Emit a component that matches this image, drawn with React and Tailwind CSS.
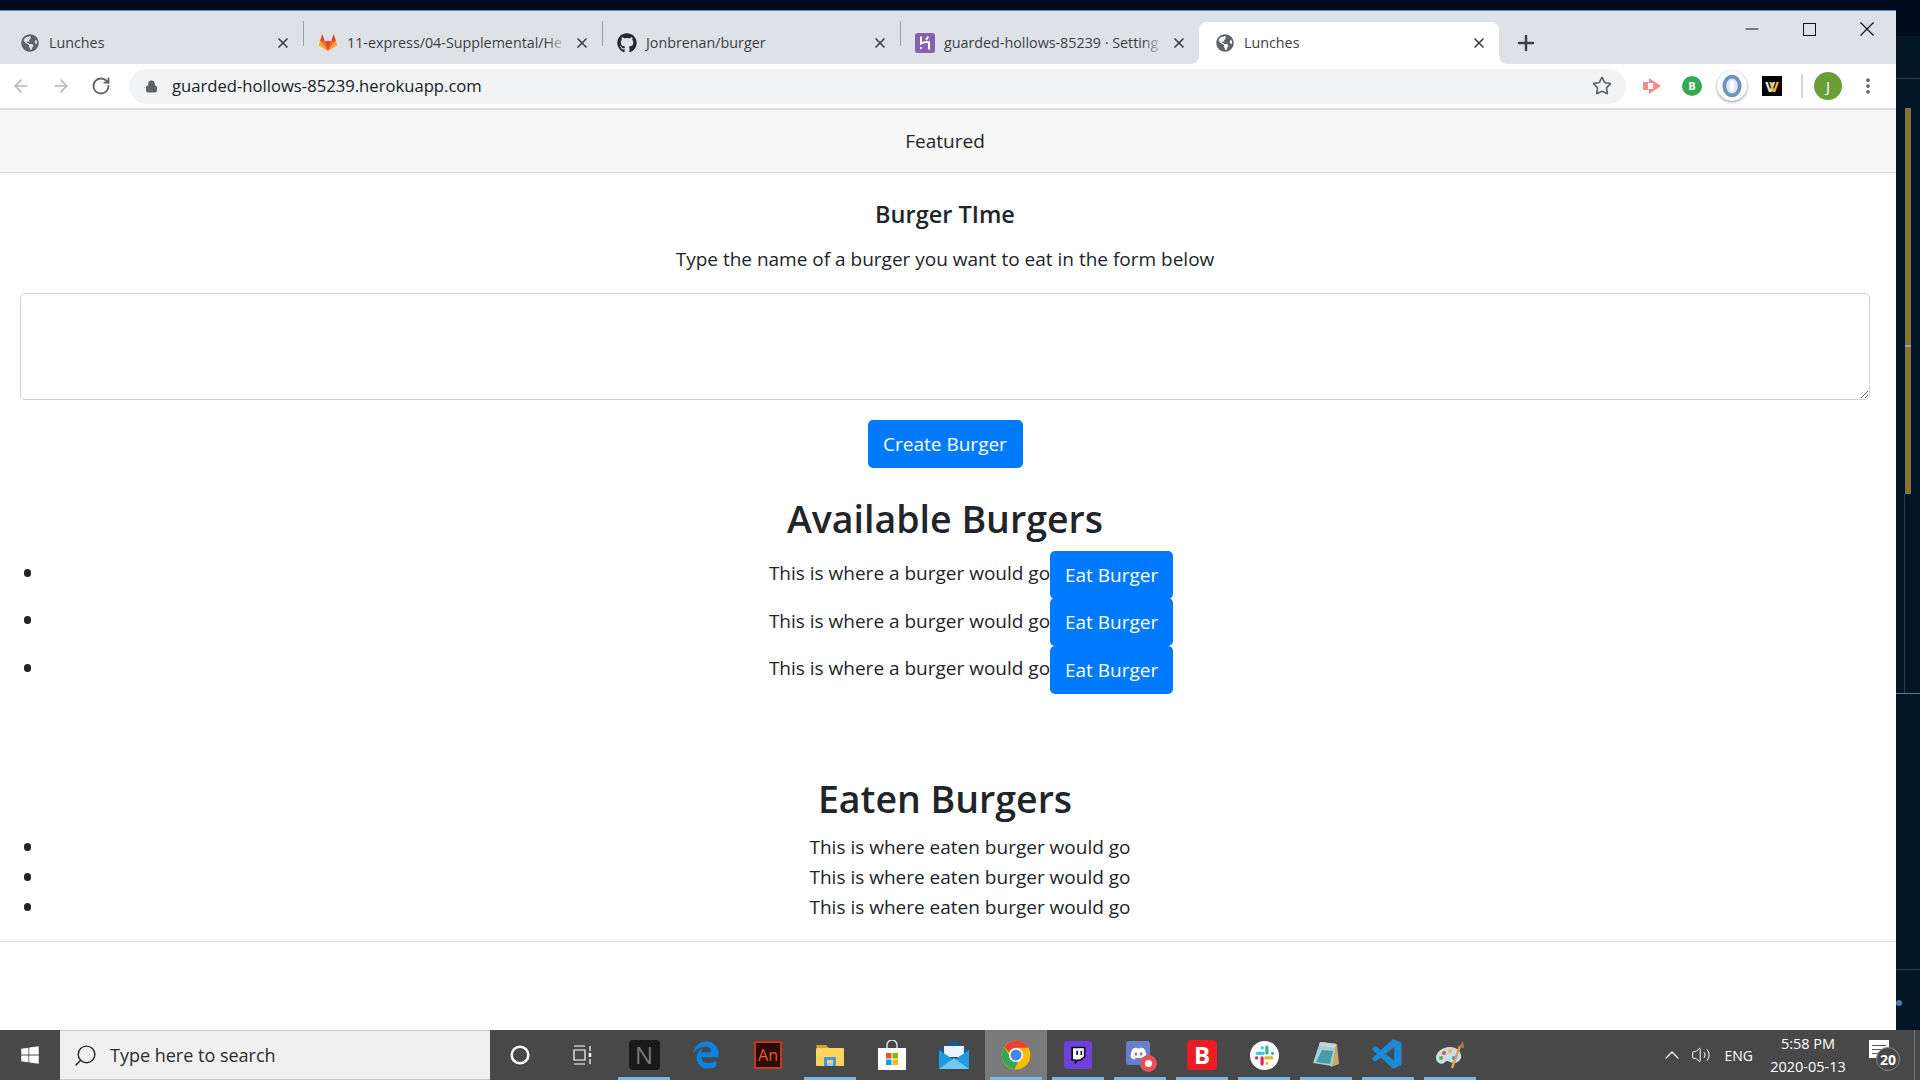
import React from "react";
import { ArrowLeft, ArrowRight, RotateCw, Lock, Star, X, Plus, Minus, MoreVertical, Search, ChevronUp, Volume2, Circle } from "lucide-react";
import { FaGlobeAmericas, FaGithub, FaDiscord, FaWindows, FaEdgeLegacy } from "react-icons/fa";
import { VscVscode } from "react-icons/vsc";

const GitlabIcon = () => (
    <svg viewBox="0 0 24 24" className="w-5 h-5">
        <path d="M12 22 16 9.5H8z" fill="#e24329" />
        <path d="M12 22 8 9.5H2.5z" fill="#fc6d26" />
        <path d="M2.5 9.5 1 14a1 1 0 0 0 .4 1.1L12 22z" fill="#fca326" />
        <path d="M2.5 9.5H8L5.6 2.2a.4.4 0 0 0-.8 0z" fill="#e24329" />
        <path d="M12 22 16 9.5h5.5z" fill="#fc6d26" />
        <path d="M21.5 9.5 23 14a1 1 0 0 1-.4 1.1L12 22z" fill="#fca326" />
        <path d="M21.5 9.5H16l2.4-7.3a.4.4 0 0 1 .8 0z" fill="#e24329" />
    </svg>
);

const HerokuIcon = () => (
    <svg viewBox="0 0 20 20" className="w-5 h-5">
        <rect width="20" height="20" rx="2.5" fill="#8562b0" />
        <path d="M6 3.5v7c2.5-1.4 5-2 8-1.3v7.3" fill="none" stroke="#fff" strokeWidth="2" />
        <path d="M13 3.5c-.3 1.4-1 2.4-2 3.2" fill="none" stroke="#fff" strokeWidth="2" />
        <path d="M5 13.5l2.5 1.5L5 16.5z" fill="#fff" />
    </svg>
);

const ChromeIcon = () => (
    <svg viewBox="0 0 24 24" className="w-[30px] h-[30px]">
        <circle cx="12" cy="12" r="11.5" fill="#fbbc05" />
        <path d="M12 .5a11.5 11.5 0 0 1 10 5.75H12a5.75 5.75 0 0 0-5.4 3.8L2.6 5.4A11.5 11.5 0 0 1 12 .5z" fill="#ea4335" />
        <path d="M2.6 5.4l4 6.9a5.75 5.75 0 0 0 7.3 5.1l-3.2 6A11.5 11.5 0 0 1 2.6 5.4z" fill="#34a853" />
        <circle cx="12" cy="12" r="5.6" fill="#fff" />
        <circle cx="12" cy="12" r="4.4" fill="#4285f4" />
    </svg>
);

const SlackIcon = () => (
    <svg viewBox="0 0 24 24" className="w-[29px] h-[29px]">
        <circle cx="12" cy="12" r="12" fill="#fff" />
        <g strokeWidth="2.6" strokeLinecap="round" fill="none">
            <path d="M6 10.2h5M10.2 5.6v.1" stroke="#36c5f0" />
            <path d="M14 5v5M18.6 10.2h.1" stroke="#2eb67d" />
            <path d="M13 14h5M14 18.4v.1" stroke="#ecb22e" />
            <path d="M10 14v5M5.4 14h.1" stroke="#e01e5a" />
        </g>
    </svg>
);

const FolderIcon = () => (
    <svg viewBox="0 0 28 24" className="w-[28px] h-[24px]">
        <path d="M0 3a1 1 0 0 1 1-1h9l3 3H1z" fill="#d9a11f" />
        <rect x="0" y="5" width="28" height="18" rx="1" fill="#ffd45e" />
        <path d="M8 23v-8a1 1 0 0 1 1-1h10a1 1 0 0 1 1 1v8h-3v-6h-6v6z" fill="#3f9be0" />
        <rect x="11" y="20" width="6" height="3" fill="#8fcbf0" />
    </svg>
);

const StoreIcon = () => (
    <svg viewBox="0 0 28 30" className="w-[28px] h-[30px]">
        <path d="M9 8V5a5 5 0 0 1 10 0v3" stroke="#ddd" strokeWidth="1.5" fill="none" />
        <rect x="0" y="8" width="28" height="22" fill="#fff" />
        <rect x="8" y="13" width="5.5" height="5.5" fill="#f25022" />
        <rect x="14.5" y="13" width="5.5" height="5.5" fill="#7fba00" />
        <rect x="8" y="19.5" width="5.5" height="5.5" fill="#00a4ef" />
        <rect x="14.5" y="19.5" width="5.5" height="5.5" fill="#ffb900" />
    </svg>
);

const MailIcon = () => (
    <svg viewBox="0 0 30 28" className="w-[30px] h-[28px]">
        <path d="M0 9 15 0l15 9v2H0z" fill="#0a5fa8" />
        <path d="M5 5h20v11H5z" fill="#e8f3fb" />
        <path d="M0 9l15 10 15-10v19H0z" fill="#1f9be3" />
        <path d="M0 28 15 17l15 11z" fill="#6fc8f2" />
    </svg>
);

const TwitchIcon = () => (
    <div className="w-7 h-7 rounded-[3px] bg-[#6f3fe0] flex items-center justify-center">
        <svg viewBox="0 0 24 24" className="w-5 h-5">
            <path d="M5 3h15v11l-5 4h-3l-3 3v-3H5z" fill="#fff" stroke="#111" strokeWidth="2" />
            <path d="M11 7v5M16 7v5" stroke="#111" strokeWidth="2" />
        </svg>
    </div>
);

const DiscordIcon = () => (
    <div className="relative w-[28px] h-[28px]">
        <div className="w-6 h-6 rounded-[3px] bg-[#6a7fc9] flex items-center justify-center">
            <FaDiscord className="text-white text-[17px]" />
        </div>
        <div className="absolute right-[-3px] bottom-[-3px] w-[17px] h-[17px] rounded-full bg-[#e8505b] flex items-center justify-center">
            <div className="w-[7px] h-[7px] rounded-full bg-white" />
        </div>
    </div>
);

const NotepadIcon = () => (
    <svg viewBox="0 0 28 30" className="w-[28px] h-[30px]">
        <path d="M9 2 25 4l2 20-8 3z" fill="#c9a866" />
        <path d="M8 2 24 4l-4 22-19-3z" fill="#9ed4d8" />
        <path d="M8 2 24 4l-1 4L7 6z" fill="#c7d3d6" />
        <path d="M10 10l11 1-3 13-14-2z" fill="#4f98a8" />
    </svg>
);

const PaintIcon = () => (
    <svg viewBox="0 0 30 30" className="w-[30px] h-[30px]">
        <path d="M15 7C7 7 1 12 1 18c0 5 6 7 8 5 2-2 3-3 6-1 4 2 9 1 11-4 1-5-3-11-11-11z" fill="#c9dce8" />
        <circle cx="9" cy="13" r="2" fill="#e2574c" />
        <circle cx="15" cy="11" r="2" fill="#f2b632" />
        <circle cx="6" cy="18" r="2" fill="#5db34d" />
        <circle cx="19" cy="18" r="2" fill="#3a8ad0" />
        <path d="M17 28 25 6" stroke="#d9a34a" strokeWidth="2.5" />
        <path d="M24 7 28 1l1 7z" fill="#b5793a" />
    </svg>
);

const ExtArrow = () => (
    <svg viewBox="0 0 20 20" className="w-5 h-5">
        <path d="M1 6h6V2l12 8-12 8v-4H1z" fill="#f58c8c" />
        <rect x="6" y="7" width="5" height="6" fill="#fff" />
    </svg>
);

const ExtRing = () => (
    <div className="w-[30px] h-[30px] rounded-full bg-white shadow-[0_1px_3px_rgba(0,0,0,0.45)] flex items-center justify-center">
        <svg viewBox="0 0 20 20" className="w-[22px] h-[22px]">
            <ellipse cx="10" cy="10" rx="7" ry="8.5" fill="#dfe9f3" stroke="#6f92bd" strokeWidth="3.5" />
            <ellipse cx="10" cy="10" rx="2" ry="5" fill="#fff" />
        </svg>
    </div>
);

const ExtW = () => (
    <div className="w-5 h-5 bg-black flex items-center justify-center text-[15px] leading-none font-bold">
        <span className="text-[#e8e8e8] -mr-[6px]">V</span>
        <span className="text-[#f2c230]">V</span>
    </div>
);

const Tab = ({ icon, title, active, width, padLeft }) => (
    <div className={`relative flex items-center h-[42px] ${width} ${padLeft} pr-[12px] ${active ? "bg-white rounded-t-[8px]" : ""}`}>
        <span className="w-5 h-5 flex items-center justify-center shrink-0">{icon}</span>
        <span className="relative ml-[9px] flex-1 whitespace-nowrap text-[14.3px] leading-5 text-[#3c4043]">
            {title}
            <span className={`absolute right-0 top-0 h-full w-5 bg-gradient-to-r from-transparent ${active ? "to-white" : "to-[#dee1e6]"}`} />
        </span>
        <X className="ml-[8px] w-[16px] h-[16px] text-[#3c4043] shrink-0" strokeWidth={2.5} />
        {active && (
            <>
                <span className="absolute -left-2 bottom-0 w-2 h-2 bg-white">
                    <span className="block w-full h-full bg-[#dee1e6] rounded-br-[8px]" />
                </span>
                <span className="absolute -right-2 bottom-0 w-2 h-2 bg-white">
                    <span className="block w-full h-full bg-[#dee1e6] rounded-bl-[8px]" />
                </span>
            </>
        )}
    </div>
);

const TabSep = () => <div className="w-px h-[25px] mb-[8px] self-center bg-[#9aa0a6]" />;

const globe = <FaGlobeAmericas className="text-[#5f6368] text-[18px]" />;

const TabStrip = () => (
    <div className="relative flex items-end h-[54px] bg-[#dee1e6] border-t border-[#3f8fc4]">
        <Tab icon={globe} title="Lunches" width="w-[303px]" padLeft="pl-[20px]" />
        <TabSep />
        <Tab icon={<GitlabIcon />} title="11-express/04-Supplemental/He" width="w-[298px]" padLeft="pl-[14px]" />
        <TabSep />
        <Tab icon={<FaGithub className="text-[#24292e] text-[20px]" />} title="Jonbrenan/burger" width="w-[297px]" padLeft="pl-[14px]" />
        <TabSep />
        <Tab icon={<HerokuIcon />} title="guarded-hollows-85239 · Setting" width="w-[298px]" padLeft="pl-[14px]" />
        <Tab icon={globe} title="Lunches" active width="w-[300px]" padLeft="pl-[16px]" />
        <Plus className="ml-[15px] mb-[9px] w-6 h-6 text-[#3c4043]" strokeWidth={2.5} />
        <div className="flex-1" />
        <div className="flex items-center self-start mt-[8px] mr-[19px] gap-[37.5px] text-[#111]">
            <Minus className="w-5 h-5" strokeWidth={1.3} />
            <div className="w-5 h-5 flex items-center justify-center">
                <div className="w-[13px] h-[13px] border border-[#111]" />
            </div>
            <X className="w-5 h-5 scale-125" strokeWidth={1.1} />
        </div>
    </div>
);

const Toolbar = () => (
    <div className="flex items-center h-[46px] bg-white border-b-2 border-[#dadce0]">
        <div className="flex items-center gap-[20px] pl-[11px] text-[#b6b9bd]">
            <ArrowLeft className="w-5 h-5" strokeWidth={2} />
            <ArrowRight className="w-5 h-5" strokeWidth={2} />
            <RotateCw className="w-5 h-5 text-[#5f6368]" strokeWidth={2.2} />
        </div>
        <div className="ml-[18px] flex items-center w-[1497px] h-[35px] rounded-full bg-[#f1f3f4] pl-[16px] pr-[14px]">
            <Lock className="w-[13px] h-[13px] text-[#5f6368] fill-[#5f6368]" />
            <span className="ml-[14px] flex-1 text-[16.65px] text-[#202124] whitespace-nowrap">guarded-hollows-85239.herokuapp.com</span>
            <Star className="w-5 h-5 text-[#5f6368]" strokeWidth={2} />
        </div>
        <div className="ml-[16px] w-5 flex justify-center"><ExtArrow /></div>
        <div className="ml-[20px] w-5 h-5 rounded-full bg-[#34a853] text-white text-[11px] font-bold flex items-center justify-center">B</div>
        <div className="ml-[15px]"><ExtRing /></div>
        <div className="ml-[15px]"><ExtW /></div>
        <div className="ml-[19px] w-[2px] h-6 bg-[#d3d5d8]" />
        <div className="ml-[11px] w-7 h-7 rounded-full bg-[#6a9f38] text-white text-[15px] flex items-center justify-center">J</div>
        <MoreVertical className="ml-[16px] w-5 h-5 text-[#5f6368]" strokeWidth={2.5} />
    </div>
);

const BurgerRow = () => (
    <li className="flex items-center h-[47.5px]">
        <span className="-mt-[4px] w-[7px] h-[8px] rounded-full bg-[#212529]" />
        <div className="flex-1 flex items-center justify-center pl-[41px]">
            <span className="-mt-[3px] whitespace-nowrap">This is where a burger would go</span>
            <button className="w-[123px] h-[48px] shrink-0 rounded-[5px] bg-[#007bff] text-white">Eat Burger</button>
        </div>
    </li>
);

const EatenRow = () => (
    <li className="flex items-center h-[30px]">
        <span className="w-[7px] h-[8px] rounded-full bg-[#212529]" />
        <div className="flex-1 text-center pl-[39px]">This is where eaten burger would go</div>
    </li>
);

const Page = () => (
    <div className="flex-1 bg-white text-[#212529] text-[19px] leading-[30px]">
        <div className="h-[63px] flex items-center justify-center pr-[6px] bg-[#f7f7f7] border-b border-[#dfdfdf]">Featured</div>
        <div className="pr-[6px]">
            <h5 className="mt-[26px] text-center text-[23.5px] leading-[30px] font-semibold">Burger TIme</h5>
            <p className="mt-[15px] text-center">Type the name of a burger you want to eat in the form below</p>
            <div className="mt-[19px] px-[20px]">
                <textarea className="block w-full h-[107px] rounded-[5px] border border-[#ced4da] bg-white" />
            </div>
            <div className="mt-[20px] flex justify-center">
                <button className="w-[155px] h-[48px] rounded-[5px] bg-[#007bff] text-white">Create Burger</button>
            </div>
            <h2 className="mt-[27px] text-center text-[37.5px] leading-[47px] font-semibold">Available Burgers</h2>
            <ul className="mt-[9px] pl-[24px] pr-[20px] flex flex-col">
                <BurgerRow />
                <BurgerRow />
                <BurgerRow />
            </ul>
            <h2 className="mt-[81px] text-center text-[37.5px] leading-[47px] font-semibold">Eaten Burgers</h2>
            <ul className="mt-[10px] pl-[24px] pr-[20px] flex flex-col">
                <EatenRow />
                <EatenRow />
                <EatenRow />
            </ul>
        </div>
        <hr className="mt-[19px] border-[#dfdfdf]" />
    </div>
);

const pinned = [
    { icon: <div className="w-[31px] h-[30px] rounded-[4px] bg-[#1a1a1a] text-[#777] text-[24px] flex items-center justify-center">N</div>, on: true },
    { icon: <FaEdgeLegacy className="text-[#0a84e0] text-[28px]" /> },
    { icon: <div className="w-7 h-7 bg-[#2b0a03] border-2 border-[#c8391b] text-[#f0572a] text-[16px] flex items-center justify-center">An</div> },
    { icon: <FolderIcon />, on: true },
    { icon: <StoreIcon /> },
    { icon: <MailIcon /> },
    { icon: <ChromeIcon />, on: true, hl: true },
    { icon: <TwitchIcon />, on: true },
    { icon: <DiscordIcon />, on: true },
    { icon: <div className="w-[30px] h-[30px] rounded-[4px] bg-[#ed1c24] text-white text-[24px] font-bold flex items-center justify-center">B</div>, on: true },
    { icon: <SlackIcon />, on: true },
    { icon: <NotepadIcon />, on: true },
    { icon: <VscVscode className="text-[#1a8ad8] text-[36px]" />, on: true },
    { icon: <PaintIcon />, on: true },
];

const Taskbar = () => (
    <div className="flex items-center h-[50px] bg-[#484848] text-white">
        <div className="w-[60px] flex justify-center"><FaWindows className="text-[20px] text-white" /></div>
        <div className="w-[430px] h-full flex items-center bg-[#f0f0f0] border-y border-[#c9c9c9] text-[#2b2b2b]">
            <Search className="ml-[13px] w-[25px] h-[25px] -scale-x-100" strokeWidth={1.4} />
            <span className="ml-[12px] text-[18px]">Type here to search</span>
        </div>
        <div className="w-[60px] flex justify-center"><Circle className="w-5 h-5 text-white" strokeWidth={3} /></div>
        <div className="w-[63px] flex justify-center">
            <svg viewBox="0 0 20 20" className="w-5 h-5" fill="none" stroke="#fff" strokeWidth="1.2">
                <path d="M2 1h11M2 19h11M2 5h11v10H2zM18 1v5M18 14v5" />
                <path d="M18 8v4" strokeWidth="2.5" />
            </svg>
        </div>
        <div className="flex h-full">
            {pinned.map((item, i) => (
                <div key={i} className={`relative w-[62px] h-full flex items-center justify-center ${item.hl ? "bg-[#7a7a7a]" : ""}`}>
                    {item.icon}
                    {item.on && <span className="absolute left-[5px] right-[5px] bottom-0 h-[3px] bg-[#76b9ed]" />}
                </div>
            ))}
        </div>
        <div className="flex-1" />
        <ChevronUp className="w-6 h-6 text-white" strokeWidth={1.2} />
        <Volume2 className="ml-[7px] w-5 h-5 text-white" strokeWidth={1.2} />
        <span className="ml-[14px] text-[14px]">ENG</span>
        <div className="ml-[17px] w-[76px] flex flex-col items-center text-[14.5px] leading-[23px] whitespace-nowrap">
            <span>5:58 PM</span>
            <span>2020-05-13</span>
        </div>
        <div className="relative ml-[23px] mr-[25px] w-5 h-[18px] -mt-[12px] bg-white flex flex-col justify-center gap-[3px] px-[3px]">
            <span className="h-px bg-[#555]" />
            <span className="h-px bg-[#555]" />
            <span className="h-px bg-[#555]" />
            <span className="absolute left-[7px] top-[7px] w-6 h-6 rounded-full border border-[#888] bg-[#484848] text-white text-[14px] font-bold flex items-center justify-center">20</span>
        </div>
        <div className="w-px h-full bg-[#777]" />
        <div className="w-[5px]" />
    </div>
);

// bits of the editor window showing behind the browser
const BackdropStrip = () => (
    <div className="flex-1 relative bg-[#021628]">
        <div className="absolute left-0 top-0 w-full h-[26px] bg-[#000c1c]" />
        <span className="absolute left-0 top-[68px] w-full h-px bg-[#2a3f52]" />
        <div className="absolute left-[9px] top-[98px] w-[6px] h-[386px] bg-[#85733a]">
            <span className="absolute left-0 top-[237px] w-full h-[2px] bg-[#8fa6b8]" />
        </div>
        <span className="absolute left-[8px] top-[484px] w-px h-[199px] bg-[#2a3f52]" />
        <span className="absolute left-0 top-[683px] w-full h-px bg-[#5a7a95]" />
        <span className="absolute left-0 top-[959px] w-full h-px bg-[#2a3f52]" />
        <span className="absolute left-[0px] top-[990px] w-[6px] h-[6px] rounded-full bg-[#4a7aa8]" />
    </div>
);

const App = () => (
    <div className="w-[1920px] h-[1080px] overflow-hidden flex flex-col bg-[#021426] [font-family:'Open_Sans',sans-serif]">
        <div className="h-[10px] bg-[#000c1c]" />
        <div className="flex-1 flex">
            <div className="w-[1896px] flex flex-col">
                <TabStrip />
                <Toolbar />
                <Page />
            </div>
            <BackdropStrip />
        </div>
        <Taskbar />
    </div>
);

export default App;
